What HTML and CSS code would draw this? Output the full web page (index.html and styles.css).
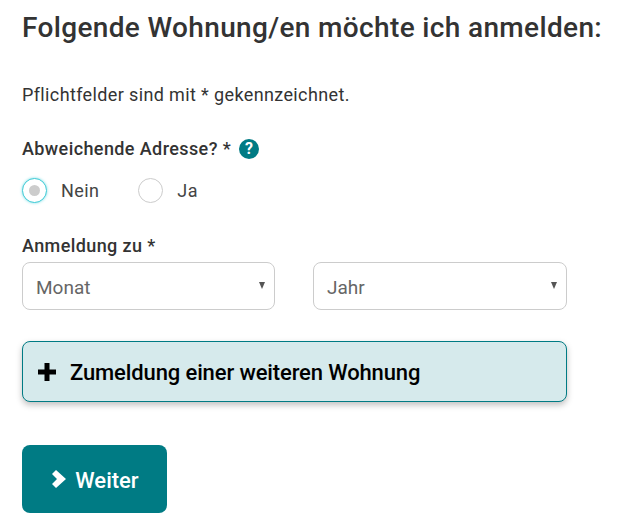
FILE: index.html
```html
<!DOCTYPE html>
<html lang="de">
<head>
<meta charset="utf-8">
<title>Anmeldung</title>
<link rel="stylesheet" href="styles.css">
</head>
<body>
<main class="page">
  <h1 class="title">Folgende Wohnung/en möchte ich anmelden:</h1>
  <p class="hint">Pflichtfelder sind mit * gekennzeichnet.</p>
  <div class="label-row">
    <span class="label">Abweichende Adresse? *</span>
    <span class="help">?</span>
  </div>
  <div class="radios">
    <label class="radio"><span class="dot dot-active"></span><span class="radio-text">Nein</span></label>
    <label class="radio"><span class="dot"></span><span class="radio-text">Ja</span></label>
  </div>
  <div class="label label-date">Anmeldung zu *</div>
  <div class="selects">
    <div class="select"><span>Monat</span><span class="caret"></span></div>
    <div class="select"><span>Jahr</span><span class="caret"></span></div>
  </div>
  <div class="add">
    <svg class="plus" width="18" height="18" viewBox="0 0 18 18"><path d="M6.500 0h5v6.500H18v5h-6.500V18h-5v-6.500H0v-5h6.500z"/></svg>
    <span class="btn-text">Zumeldung einer weiteren Wohnung</span>
  </div>
  <div class="next">
    <svg class="chev" width="14" height="18" viewBox="0 0 14 18"><path d="M0 4l4-4 10 9-10 9-4-4 5-5z"/></svg>
    <span class="btn-text">Weiter</span>
  </div>
</main>
</body>
</html>
```
FILE: styles.css
```css
html, body { margin: 0; background: #fff; }
body { font-family: Roboto, "Noto Sans", sans-serif; color: #333; }
.page { width: 545px; padding: 0 0 15px 22px; height: 513px; }
.title { margin: 0; padding-top: 11px; font-size: 28px; line-height: 34px; font-weight: 500; white-space: nowrap; letter-spacing: 0.35px; }
.hint { margin: 38px 0 0; font-size: 18px; line-height: 24px; letter-spacing: 0.37px; }
.label-row { display: flex; align-items: center; gap: 8px; margin-top: 30px; height: 24px; }
.label { font-size: 18px; line-height: 24px; font-weight: 500; letter-spacing: 0.4px; }
.help { width: 20px; height: 20px; border-radius: 50%; background: #007b84; color: #fff; font-size: 16px; font-weight: 700; line-height: 20px; text-align: center; }
.radios { display: flex; gap: 39px; margin-top: 16px; height: 26px; }
.radio { display: flex; align-items: center; gap: 14px; font-size: 18px; letter-spacing: 0.4px; color: #444; }
.dot { width: 25px; height: 25px; box-sizing: border-box; border: 1px solid #ccc; border-radius: 50%; background: #fff; }
.dot-active { border-color: #3fcbd6; box-shadow: 0 0 3px #7fdde5; display: flex; align-items: center; justify-content: center; }
.dot-active::after { content: ""; width: 11px; height: 11px; border-radius: 50%; background: #ccc; }
.label-date { margin-top: 31px; }
.selects { display: grid; grid-template-columns: 253px 1fr; gap: 38px; margin-top: 4px; }
.select { height: 48px; box-sizing: border-box; border: 1px solid #ccc; border-radius: 8px; padding: 2px 9px 0 13px; display: flex; align-items: center; justify-content: space-between; font-size: 19px; color: #666; background: #fff; }
.caret { width: 0; height: 0; border-left: 3.500px solid transparent; border-right: 3.500px solid transparent; border-top: 7px solid #555; margin-top: -4px; }
.add { display: flex; align-items: center; gap: 14px; margin-top: 31px; height: 61px; box-sizing: border-box; border: 1px solid #007b84; border-radius: 8px; background: #d6eaec; padding-left: 15px; font-size: 22px; font-weight: 500; color: #000; box-shadow: 0 3px 6px rgba(0,0,0,.25); letter-spacing: -0.12px; }
.btn-text { padding-top: 2px; }
.plus { fill: #000; }
.next { display: flex; align-items: center; gap: 9px; margin-top: 43px; width: 145px; height: 68px; box-sizing: border-box; padding-left: 2px; border-radius: 8px; background: #007b84; color: #fff; font-size: 22px; font-weight: 500; justify-content: center; }
.chev { fill: #fff; }
```
